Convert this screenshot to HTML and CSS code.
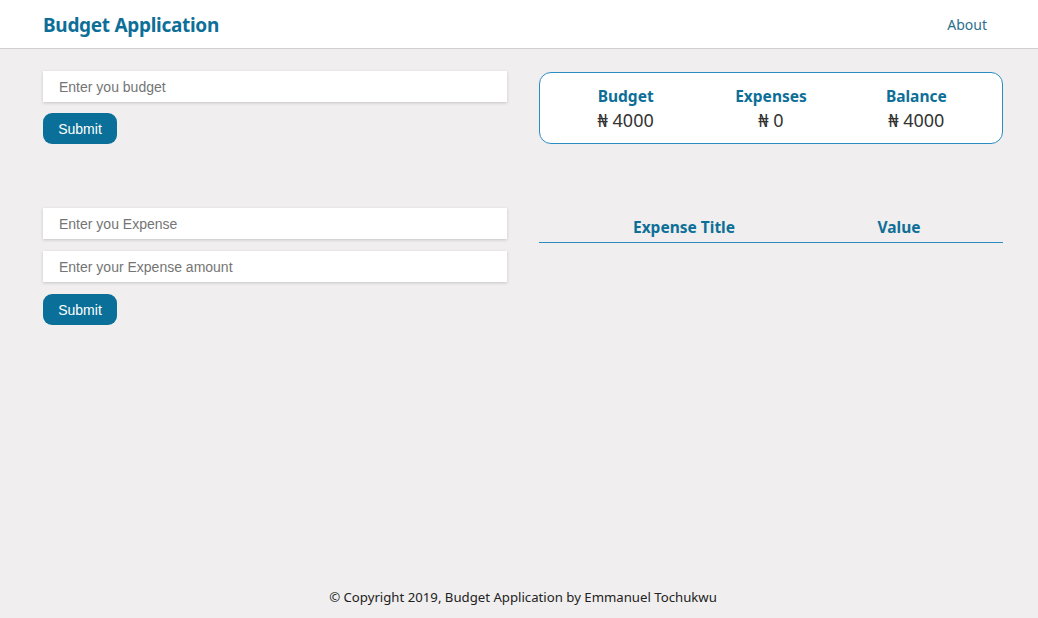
FILE: index.html
```html
<!DOCTYPE html>
<html>
<head>
<meta charset="utf-8">
<title>Budget Application</title>
<link rel="stylesheet" href="styles.css">
</head>
<body>
<div class="page">
  <header class="navbar">
    <div class="brand">Budget Application</div>
    <a class="nav-link" href="#">About</a>
  </header>
  <main class="content">
    <section class="row">
      <div class="form-col">
        <input class="field" type="text" placeholder="Enter you budget">
        <button class="btn">Submit</button>
      </div>
      <div class="summary">
        <div class="stat">
          <div class="stat-label">Budget</div>
          <div class="stat-value">₦ 4000</div>
        </div>
        <div class="stat">
          <div class="stat-label">Expenses</div>
          <div class="stat-value">₦ 0</div>
        </div>
        <div class="stat">
          <div class="stat-label">Balance</div>
          <div class="stat-value">₦ 4000</div>
        </div>
      </div>
    </section>
    <section class="row second">
      <div class="form-col">
        <input class="field" type="text" placeholder="Enter you Expense">
        <input class="field" type="text" placeholder="Enter your Expense amount">
        <button class="btn">Submit</button>
      </div>
      <div class="table">
        <div class="table-head">
          <div class="th th-title">Expense Title</div>
          <div class="th th-value">Value</div>
        </div>
      </div>
    </section>
  </main>
  <footer class="footer">© Copyright 2019, Budget Application by Emmanuel Tochukwu</footer>
</div>
</body>
</html>
```
FILE: styles.css
```css
* { box-sizing: border-box; }
html, body { margin: 0; padding: 0; }
body {
  background: #f0eeee;
  font-family: "Noto Sans", "Open Sans", sans-serif;
  color: #222;
}
.page {
  min-height: 618px;
  display: flex;
  flex-direction: column;
}
.navbar {
  height: 49px;
  background: #fff;
  border-bottom: 1px solid #cfcfcf;
  display: flex;
  align-items: center;
  justify-content: space-between;
  padding: 0 51px 0 43px;
}
.brand {
  font-size: 19px;
  font-weight: 700;
  color: #0d6f98;
  letter-spacing: -0.3px;
  margin-top: 1px;
}
.nav-link {
  font-size: 14px;
  color: #2b6f8e;
  text-decoration: none;
}
.content {
  flex: 1;
  padding: 22px 35px 0 43px;
}
.row {
  display: grid;
  grid-template-columns: 464px 464px;
  column-gap: 32px;
  align-items: start;
}
.row.second { margin-top: 64px; }
.form-col {
  display: flex;
  flex-direction: column;
  align-items: flex-start;
  gap: 11px;
}
.second .form-col { gap: 12px; }
.field {
  width: 464px;
  height: 31px;
  border: none;
  background: #fff;
  box-shadow: 0 1px 3px rgba(0,0,0,0.18);
  padding: 0 16px;
  font-family: "Liberation Sans", Arial, sans-serif;
  font-size: 14px;
  color: #333;
  outline: none;
}
.field::placeholder { color: #757575; }
.btn {
  width: 74px;
  height: 31px;
  border: none;
  border-radius: 9px;
  background: #0a7099;
  color: #fff;
  font-family: "Liberation Sans", Arial, sans-serif;
  font-size: 14px;
  padding: 0;
}
.summary {
  margin-top: 1px;
  height: 72px;
  background: #fff;
  border: 1px solid #2b8cc0;
  border-radius: 12px;
  display: grid;
  grid-template-columns: repeat(3, 1fr);
  padding: 11px 13px 0;
}
.stat { text-align: center; }
.stat-label {
  font-size: 15.5px;
  font-weight: 700;
  color: #0d6f98;
  line-height: 24px;
}
.stat-value {
  font-size: 18px;
  color: #333;
  line-height: 24px;
}
.table { margin-top: 6px; }
.table-head {
  display: grid;
  grid-template-columns: 290px 140px;
  border-bottom: 1px solid #2b8cc0;
  height: 29px;
}
.th {
  text-align: center;
  font-size: 15.5px;
  font-weight: 700;
  color: #0d6f98;
  line-height: 26px;
}
.footer {
  text-align: center;
  font-size: 13.2px;
  color: #222;
  padding: 0 0 11px 8px;
  line-height: 20px;
}
```
